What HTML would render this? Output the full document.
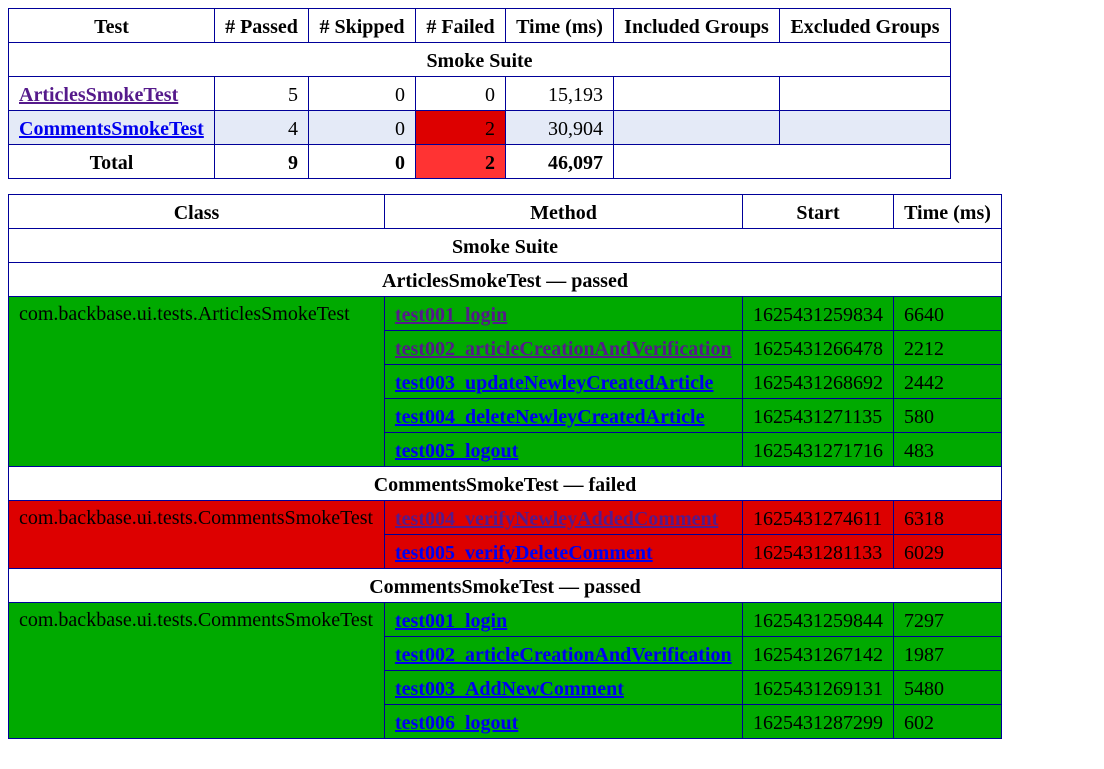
<!DOCTYPE html>
<html><head><meta charset="utf-8"><style>
body{margin:8px;font-family:"Liberation Serif",serif;font-size:20px;background:#fff;color:#000}
table{border-collapse:collapse;table-layout:fixed;margin-bottom:15px}
th,td{border:1px solid #009;padding:3px 10px 0;height:34px;box-sizing:border-box;white-space:nowrap;overflow:hidden}
th{font-weight:bold;text-align:center}
td.n{text-align:right}
a{color:#00e;font-weight:bold}
a.v{color:#551a8b}
.st{background:#e4eaf7}
.f{background:#d00}
.ft{background:#f33}
.p td{background:#0a0}
.r td{background:#d00}
td.top{vertical-align:top;padding-top:6px}
</style></head><body>
<table style="width:942px">
<colgroup><col style="width:206px"><col style="width:94px"><col style="width:107px"><col style="width:90px"><col style="width:108px"><col style="width:166px"><col style="width:171px"></colgroup>
<tr><th>Test</th><th># Passed</th><th># Skipped</th><th># Failed</th><th>Time (ms)</th><th>Included Groups</th><th>Excluded Groups</th></tr>
<tr><th colspan="7">Smoke Suite</th></tr>
<tr><td><a class="v" href="#">ArticlesSmokeTest</a></td><td class="n">5</td><td class="n">0</td><td class="n">0</td><td class="n">15,193</td><td></td><td></td></tr>
<tr class="st"><td><a href="#">CommentsSmokeTest</a></td><td class="n">4</td><td class="n">0</td><td class="n f">2</td><td class="n">30,904</td><td></td><td></td></tr>
<tr><th>Total</th><th style="text-align:right">9</th><th style="text-align:right">0</th><th class="ft" style="text-align:right">2</th><th style="text-align:right">46,097</th><th colspan="2"></th></tr>
</table>
<table style="width:993px">
<colgroup><col style="width:376px"><col style="width:358px"><col style="width:151px"><col style="width:108px"></colgroup>
<tr><th>Class</th><th>Method</th><th>Start</th><th>Time (ms)</th></tr>
<tr><th colspan="4">Smoke Suite</th></tr>
<tr><th colspan="4">ArticlesSmokeTest — passed</th></tr>
<tr class="p"><td rowspan="5" class="top">com.backbase.ui.tests.ArticlesSmokeTest</td><td><a class="v" href="#">test001_login</a></td><td>1625431259834</td><td>6640</td></tr>
<tr class="p"><td><a class="v" href="#">test002_articleCreationAndVerification</a></td><td>1625431266478</td><td>2212</td></tr>
<tr class="p"><td><a href="#">test003_updateNewleyCreatedArticle</a></td><td>1625431268692</td><td>2442</td></tr>
<tr class="p"><td><a href="#">test004_deleteNewleyCreatedArticle</a></td><td>1625431271135</td><td>580</td></tr>
<tr class="p"><td><a href="#">test005_logout</a></td><td>1625431271716</td><td>483</td></tr>
<tr><th colspan="4">CommentsSmokeTest — failed</th></tr>
<tr class="r"><td rowspan="2" class="top">com.backbase.ui.tests.CommentsSmokeTest</td><td><a class="v" href="#">test004_verifyNewleyAddedComment</a></td><td>1625431274611</td><td>6318</td></tr>
<tr class="r"><td><a href="#">test005_verifyDeleteComment</a></td><td>1625431281133</td><td>6029</td></tr>
<tr><th colspan="4">CommentsSmokeTest — passed</th></tr>
<tr class="p"><td rowspan="4" class="top">com.backbase.ui.tests.CommentsSmokeTest</td><td><a href="#">test001_login</a></td><td>1625431259844</td><td>7297</td></tr>
<tr class="p"><td><a href="#">test002_articleCreationAndVerification</a></td><td>1625431267142</td><td>1987</td></tr>
<tr class="p"><td><a href="#">test003_AddNewComment</a></td><td>1625431269131</td><td>5480</td></tr>
<tr class="p"><td><a href="#">test006_logout</a></td><td>1625431287299</td><td>602</td></tr>
</table>
</body></html>
